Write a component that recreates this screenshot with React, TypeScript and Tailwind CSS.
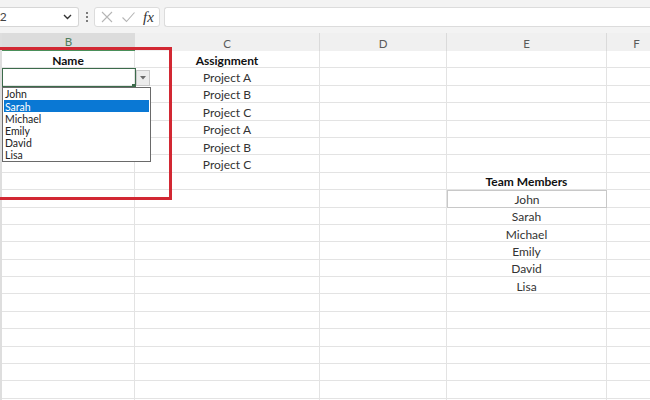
import React from "react";

const cols = [
  { key: "A", w: 2 },
  { key: "B", w: 133 },
  { key: "C", w: 185 },
  { key: "D", w: 127 },
  { key: "E", w: 160 },
  { key: "F", w: 60 },
];

type Cell = { text?: string; bold?: boolean };
const rows: Record<string, Cell>[] = [
  { B: { text: "Name", bold: true }, C: { text: "Assignment", bold: true } },
  { C: { text: "Project A" } },
  { C: { text: "Project B" } },
  { C: { text: "Project C" } },
  { C: { text: "Project A" } },
  { C: { text: "Project B" } },
  { C: { text: "Project C" } },
  { E: { text: "Team Members", bold: true } },
  { E: { text: "John" } },
  { E: { text: "Sarah" } },
  { E: { text: "Michael" } },
  { E: { text: "Emily" } },
  { E: { text: "David" } },
  { E: { text: "Lisa" } },
  {},
  {},
  {},
  {},
  {},
  {},
  {},
];

const names = ["John", "Sarah", "Michael", "Emily", "David", "Lisa"];

export default function App() {
  return (
    <div
      className="relative w-[650px] h-[400px] overflow-hidden bg-white text-[#262626]"
      style={{ fontFamily: "Lato, 'Open Sans', sans-serif" }}
    >
      {/* Toolbar */}
      <div className="flex h-[33px] items-start bg-[#f3f3f3] pt-[7px]">
        <div className="flex h-[20px] w-[79px] items-center justify-between rounded-r-[3px] border border-l-0 border-[#d6d6d6] bg-white pr-[6px]">
          <span className="ml-[-8px] text-[12px] text-[#444]">B2</span>
          <svg width="9" height="6" viewBox="0 0 9 6">
            <path d="M1 1 L4.5 4.5 L8 1" fill="none" stroke="#333" strokeWidth="1.4" />
          </svg>
        </div>
        <div className="flex h-[20px] w-[15px] flex-col items-center justify-center gap-[2px]">
          <span className="h-[2px] w-[2px] rounded-full bg-[#555]" />
          <span className="h-[2px] w-[2px] rounded-full bg-[#555]" />
          <span className="h-[2px] w-[2px] rounded-full bg-[#555]" />
        </div>
        <div className="flex h-[20px] w-[66px] items-center gap-[7px] rounded-[3px] border border-[#dcdcdc] bg-white pl-[5px]">
          <svg width="14" height="14" viewBox="0 0 14 14">
            <path d="M2 2 L12 12 M12 2 L2 12" stroke="#b5b5b5" strokeWidth="1.1" fill="none" />
          </svg>
          <svg width="15" height="14" viewBox="0 0 15 14">
            <path d="M1.5 7.5 L5.5 11.5 L13.5 2.5" stroke="#b5b5b5" strokeWidth="1.1" fill="none" />
          </svg>
          <span
            className="text-[15px] italic leading-none text-[#333]"
            style={{ fontFamily: "'Liberation Serif', serif" }}
          >
            fx
          </span>
        </div>
        <div className="ml-[4px] h-[20px] flex-1 rounded-l-[3px] border border-r-0 border-[#dcdcdc] bg-white" />
      </div>

      {/* Column header */}
      <div className="flex h-[18px] bg-[#f0f0f0]">
        {cols.map((c) =>
          c.key === "A" ? (
            <div key={c.key} className="w-[2px] shrink-0 bg-[#dedede]" />
          ) : (
            <div
              key={c.key}
              className={
                c.key === "B"
                  ? "flex shrink-0 items-center justify-center border-b-2 border-[#4a8f5a] bg-[#dcdcdc] pt-[2px] text-[11.5px] leading-none text-[#4f7d5c]"
                  : "flex shrink-0 items-end justify-center border-r border-[#dadada] text-[11.5px] leading-[15px] text-[#5a5a5a]"
              }
              style={{ width: c.w }}
            >
              {c.key}
            </div>
          )
        )}
      </div>

      {/* Grid */}
      <div className="flex flex-col">
        {rows.map((r, i) => (
          <div key={i} className="flex h-[17.4px]">
            {cols.map((c) => {
              if (c.key === "A")
                return <div key={c.key} className="w-[2px] shrink-0 bg-[#dedede]" />;
              const cell = r[c.key];
              const john = c.key === "E" && i === 8;
              return (
                <div
                  key={c.key}
                  className={
                    "flex shrink-0 items-center justify-center border-b border-r pt-[3px] text-[12px] leading-none " +
                    (john ? "border-[#c8c8c8] border-l border-t " : "border-[#e3e3e3] ") +
                    (cell?.bold ? "font-bold text-[#111]" : "text-[#333]")
                  }
                  style={{ width: c.w }}
                >
                  {cell?.text}
                </div>
              );
            })}
          </div>
        ))}
      </div>

      {/* Selected cell B2 */}
      <div className="absolute left-[2px] top-[68px] h-[19px] w-[134px] border border-[#3c6b4b]" />
      <div className="absolute left-[132px] top-[84px] h-[4px] w-[4px] bg-[#3c6b4b]" />

      {/* Dropdown button */}
      <div className="absolute left-[136px] top-[70px] flex h-[16px] w-[14px] items-center justify-center border border-[#c9c9c9] bg-[#ececec]">
        <svg width="6" height="4" viewBox="0 0 6 4">
          <path d="M0 0 L6 0 L3 3.5 Z" fill="#6b6b6b" />
        </svg>
      </div>

      {/* Dropdown list */}
      <div
        className="absolute left-[2px] top-[87px] flex h-[75px] w-[149px] flex-col border border-[#6a6a6a] bg-white pl-[1px] pr-[1px]"
        style={{ fontFamily: "Lato, 'Open Sans', sans-serif" }}
      >
        {names.map((n) => (
          <div
            key={n}
            className={
              "flex h-[12.3px] items-center pl-[1px] pt-[1px] text-[10.5px] leading-none " +
              (n === "Sarah" ? "bg-[#0a78d4] text-white" : "text-[#222]")
            }
          >
            {n}
          </div>
        ))}
      </div>

      {/* Red highlight box */}
      <div className="absolute left-[-10px] top-[47px] h-[153px] w-[182px] border-[3.5px] border-[#d22833]" />
    </div>
  );
}
